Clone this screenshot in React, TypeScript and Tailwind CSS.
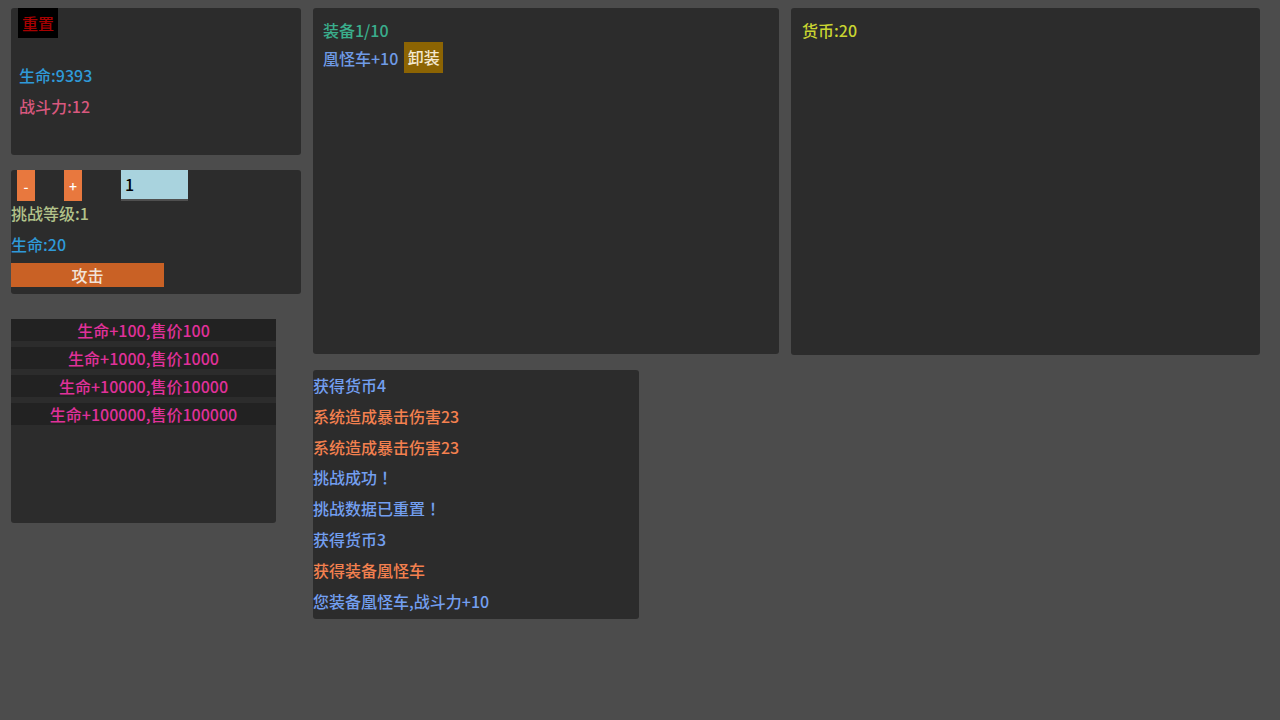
import React from "react";

const font = { fontFamily: '"Noto Sans CJK SC", "Noto Sans", sans-serif' };

const shopItems = [
  "生命+100,售价100",
  "生命+1000,售价1000",
  "生命+10000,售价10000",
  "生命+100000,售价100000",
];

const logs: { text: string; tone: "blue" | "orange" }[] = [
  { text: "获得货币4", tone: "blue" },
  { text: "系统造成暴击伤害23", tone: "orange" },
  { text: "系统造成暴击伤害23", tone: "orange" },
  { text: "挑战成功！", tone: "blue" },
  { text: "挑战数据已重置！", tone: "blue" },
  { text: "获得货币3", tone: "blue" },
  { text: "获得装备凰怪车", tone: "orange" },
  { text: "您装备凰怪车,战斗力+10", tone: "blue" },
];

// SC places the full-width ！ at the left of its box; the screenshot centres it
const LogText = ({ text }: { text: string }) => {
  if (!text.endsWith("！")) return <>{text}</>;
  return (
    <>
      {text.slice(0, -1)}
      <span className="[font-family:'Noto_Sans_CJK_TC',sans-serif]">！</span>
    </>
  );
};

export default function App() {
  return (
    <div
      className="w-[1280px] h-[720px] bg-[#4c4c4c] flex gap-3 pt-2 pl-[11px] text-base font-medium overflow-hidden"
      style={font}
    >
      {/* left column */}
      <div className="flex flex-col w-[290px]">
        <div className="h-[147px] bg-[#2c2c2c] rounded-[3px] pl-[7px]">
          <button className="w-10 h-[30px] bg-black text-[#a60000] leading-[30px]">重置</button>
          <div className="mt-[25px] ml-px leading-6 text-[#2f9ad8]">生命:9393</div>
          <div className="mt-[7px] ml-px leading-6 text-[#d8587e]">战斗力:12</div>
        </div>

        <div className="mt-[15px] h-[124px] bg-[#2c2c2c] rounded-[3px]">
          <div className="flex items-start h-[31px]">
            <button className="ml-1.5 w-[18px] h-[31px] bg-[#e8783e] text-white text-sm">-</button>
            <button className="ml-[29px] w-[18px] h-[31px] bg-[#e8783e] text-white text-sm">+</button>
            <div className="ml-[39px] w-[67px] h-[31px] bg-[#a9d3de] border-b-2 border-[#4f4f4f] text-black text-base leading-[29px] pl-1">
              1
            </div>
          </div>
          <div className="leading-6 text-[#b2c28a]">挑战等级:1</div>
          <div className="mt-[7px] leading-6 text-[#2f9ad8]">生命:20</div>
          <button className="block mt-[7px] w-[153px] h-6 bg-[#c96125] text-[#f1e3d8] leading-6">攻击</button>
        </div>

        <div className="mt-[25px] w-[265px] h-[204px] bg-[#2c2c2c] rounded-[3px] flex flex-col gap-1.5">
          {shopItems.map((item) => (
            <div key={item} className="h-[22px] bg-[#222222] text-center leading-[22px] text-[#e0319a]">
              {item}
            </div>
          ))}
        </div>
      </div>

      {/* middle column */}
      <div className="flex flex-col w-[466px]">
        <div className="h-[346px] bg-[#2c2c2c] rounded-[3px] pl-[10px] pt-[10px]">
          <div className="leading-6 text-[#3aae8c]">装备1/10</div>
          <div className="flex items-center">
            <span className="leading-6 text-[#6f9be6]">凰怪车+10</span>
            <button className="ml-1.5 w-[39px] h-[31px] bg-[#8c6403] text-[#f3e8cf] leading-[31px]">卸装</button>
          </div>
        </div>

        <div className="mt-4 w-[326px] h-[249px] bg-[#2c2c2c] rounded-[3px]">
          {logs.map((log, i) => (
            <div
              key={i}
              className={log.tone === "blue" ? "leading-[30.8px] text-[#739ff0]" : "leading-[30.8px] text-[#f3804f]"}
            >
              <LogText text={log.text} />
            </div>
          ))}
        </div>
      </div>

      {/* right column */}
      <div className="w-[469px] h-[347px] bg-[#2c2c2c] rounded-[3px] pl-[11px] pt-[10px]">
        <div className="leading-6 text-[#c9d531]">货币:20</div>
      </div>
    </div>
  );
}
